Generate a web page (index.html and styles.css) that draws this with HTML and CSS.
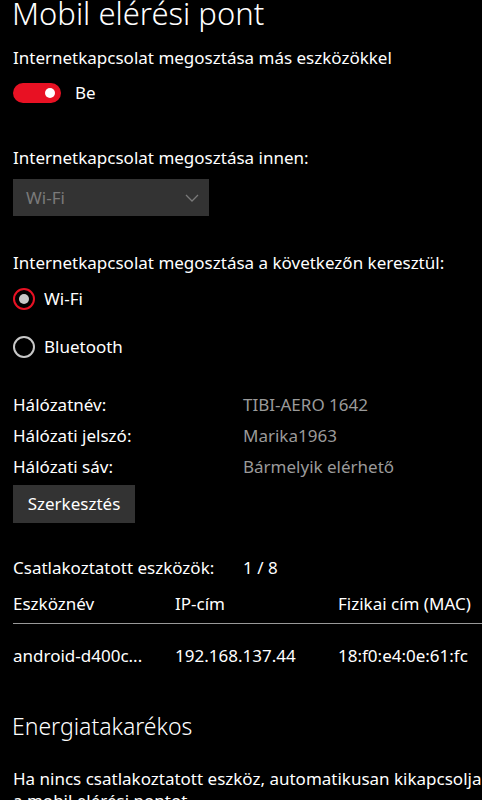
FILE: index.html
```html
<!DOCTYPE html>
<html lang="hu">
<head>
  <meta charset="UTF-8" />
  <meta name="viewport" content="width=device-width, initial-scale=1.0">
  <title>Mobil elérési pont</title>
  <link rel="stylesheet" href="styles.css">
</head>
<body>
  <div class="page">
    <h1 class="title">Mobil elérési pont</h1>

    <p class="label label-first">Internetkapcsolat megosztása más eszközökkel</p>
    <div class="toggle-row">
      <span class="toggle"><span class="knob"></span></span>
      <span>Be</span>
    </div>

    <p class="label label-gap">Internetkapcsolat megosztása innen:</p>
    <div class="dropdown">
      <span>Wi-Fi</span>
      <svg class="chevron" width="14" height="8" viewBox="0 0 14 8">
        <path d="M1 1 L7 7 L13 1" fill="none" stroke="#7a7a7a" stroke-width="1.3" />
      </svg>
    </div>

    <p class="label label-through">Internetkapcsolat megosztása a következőn keresztül:</p>
    <div class="radios">
      <div class="radio-row">
        <span class="radio checked"></span>
        <span>Wi-Fi</span>
      </div>
      <div class="radio-row">
        <span class="radio"></span>
        <span>Bluetooth</span>
      </div>
    </div>

    <div class="info">
      <span>Hálózatnév:</span><span class="value">TIBI-AERO 1642</span>
      <span>Hálózati jelszó:</span><span class="value">Marika1963</span>
      <span>Hálózati sáv:</span><span class="value">Bármelyik elérhető</span>
    </div>
    <button class="btn" type="button">Szerkesztés</button>

    <div class="connected">
      <span>Csatlakoztatott eszközök:</span><span>1 / 8</span>
    </div>

    <div class="devices">
      <div class="dev-head">
        <span>Eszköznév</span><span>IP-cím</span><span>Fizikai cím (MAC)</span>
      </div>
      <div class="dev-row">
        <span>android-d400c...</span><span>192.168.137.44</span><span>18:f0:e4:0e:61:fc</span>
      </div>
    </div>

    <h2 class="subtitle">Energiatakarékos</h2>
    <p class="desc">Ha nincs csatlakoztatott eszköz, automatikusan kikapcsolja a mobil elérési pontot.</p>
  </div>
</body>
</html>
```

FILE: styles.css
```css
* {
  margin: 0;
  padding: 0;
  box-sizing: border-box;
}

html, body {
  background: #000;
  overflow: hidden;
}

body {
  color: #fff;
  font-family: 'Noto Sans', 'Open Sans', sans-serif;
  font-size: 17px;
  line-height: 20px;
}

.page {
  padding-left: 13px;
  width: 520px;
}

.title {
  font-size: 31px;
  font-weight: 300;
  line-height: 36px;
  margin-top: -5px;
  margin-left: -1px;
}

.label-first {
  margin-top: 17px;
}

.label-gap {
  margin-top: 45px;
}

.label-through {
  margin-top: 37px;
}

.toggle-row {
  display: flex;
  align-items: center;
  gap: 14px;
  margin-top: 15px;
  height: 20px;
}

.toggle {
  width: 48px;
  height: 20px;
  border-radius: 10px;
  background: #e81123;
  display: flex;
  align-items: center;
  justify-content: flex-end;
  padding-right: 6px;
}

.knob {
  width: 10px;
  height: 10px;
  border-radius: 50%;
  background: #fff;
}

.dropdown {
  margin-top: 11px;
  width: 196px;
  height: 37px;
  background: #333;
  color: #7a7a7a;
  display: flex;
  align-items: center;
  justify-content: space-between;
  padding: 0 10px 0 13px;
}

.radios {
  margin-top: 15px;
  display: flex;
  flex-direction: column;
  gap: 26px;
}

.radio-row {
  display: flex;
  align-items: center;
  gap: 9px;
  height: 22px;
}

.radio {
  width: 22px;
  height: 22px;
  border-radius: 50%;
  border: 2px solid #c8c8c8;
  display: flex;
  align-items: center;
  justify-content: center;
}

.radio.checked {
  border-color: #e81123;
}

.radio.checked::after {
  content: "";
  width: 10px;
  height: 10px;
  border-radius: 50%;
  background: #c8c8c8;
}

.info {
  margin-top: 37px;
  display: grid;
  grid-template-columns: 230px 1fr;
  row-gap: 11px;
}

.value {
  color: #9a9a9a;
}

.btn {
  margin-top: 8px;
  height: 38px;
  width: 122px;
  border: none;
  background: #333;
  color: #fff;
  font: inherit;
}

.connected {
  margin-top: 35px;
  display: grid;
  grid-template-columns: 230px 1fr;
}

.devices {
  margin-top: 16px;
}

.dev-head,
.dev-row {
  display: grid;
  grid-template-columns: 162px 163px 1fr;
  white-space: nowrap;
}

.dev-head {
  padding-bottom: 9px;
  border-bottom: 1px solid #999;
}

.dev-row {
  margin-top: 22px;
}

.subtitle {
  margin-top: 46px;
  margin-left: -1px;
  font-size: 23px;
  font-weight: 300;
  line-height: 28px;
}

.desc {
  margin-top: 28px;
  width: 474px;
  line-height: 22px;
}
```
